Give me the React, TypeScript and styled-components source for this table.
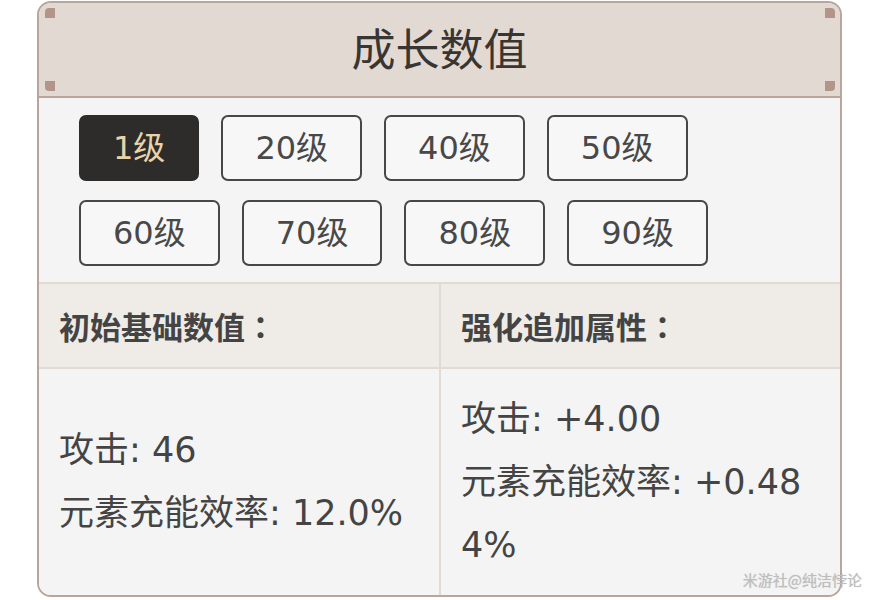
import React from 'react';
import styled, { createGlobalStyle, css } from 'styled-components';

const levels = [1, 20, 40, 50, 60, 70, 80, 90];

const baseStats = ['攻击: 46', '元素充能效率: 12.0%'];
const growthStats = ['攻击: +4.00', '元素充能效率: +0.484%'];

type Corner = 'tl' | 'tr' | 'bl' | 'br';

const App: React.FC = () => {
	const [level, setLevel] = React.useState(1);

	return (
		<Page>
			<GlobalStyle />
			<Card>
				<Header>
					<Title>成长数值</Title>
					{(['tl', 'tr', 'bl', 'br'] as Corner[]).map((c) => (
						<Rivet key={c} corner={c} />
					))}
				</Header>
				<LevelPanel>
					{levels.map((lv) => (
						<LevelButton key={lv} active={lv === level} onClick={() => setLevel(lv)}>
							{lv}级
						</LevelButton>
					))}
				</LevelPanel>
				<StatTable>
					<HeadCell>
						初始基础数值<Colon>：</Colon>
					</HeadCell>
					<HeadCell divider>
						强化追加属性<Colon>：</Colon>
					</HeadCell>
					<BodyCell>
						{baseStats.map((s) => (
							<StatLine key={s}>{s}</StatLine>
						))}
					</BodyCell>
					<BodyCell divider>
						{growthStats.map((s) => (
							<StatLine key={s}>{s}</StatLine>
						))}
					</BodyCell>
				</StatTable>
			</Card>
			<Watermark>米游社@纯洁悖论</Watermark>
		</Page>
	);
};

const GlobalStyle = createGlobalStyle`
	body {
		margin: 0;
		background: #fff;
		font-family: "DejaVu Sans", "Noto Sans CJK SC", sans-serif;
	}
`;

const Page = styled.div`
	position: relative;
	width: 877px;
	height: 600px;
	padding: 1px 0 0 37px;
	box-sizing: border-box;
`;

const Card = styled.div`
	box-sizing: border-box;
	width: 805px;
	border: 2px solid #b9a59b;
	border-radius: 14px;
	overflow: hidden;
	background: #f4f4f4;
`;

const Header = styled.div`
	position: relative;
	height: 95px;
	box-sizing: border-box;
	padding-bottom: 6px;
	display: flex;
	align-items: center;
	justify-content: center;
	background: #e2d9d2;
	border-bottom: 2px solid #b9a59b;
`;

const Title = styled.h1`
	margin: 0;
	font-family: "Noto Sans CJK SC", sans-serif;
	font-size: 44px;
	font-weight: 400;
	color: #383533;
`;

const Rivet = styled.span<{ corner: Corner }>`
	position: absolute;
	width: 10px;
	height: 10px;
	background: #b29489;
	${({ corner }) =>
		({
			tl: css`top: 5px; left: 6px; border-top-left-radius: 4px;`,
			tr: css`top: 5px; right: 5px; border-top-right-radius: 4px;`,
			bl: css`bottom: 5px; left: 6px; border-bottom-left-radius: 4px;`,
			br: css`bottom: 5px; right: 5px; border-bottom-right-radius: 4px;`,
		})[corner]}
`;

const LevelPanel = styled.div`
	display: flex;
	flex-wrap: wrap;
	column-gap: 22px;
	row-gap: 19px;
	padding: 17px 100px 16px 40px;
	background: #f4f4f4;
`;

const LevelButton = styled.button<{ active?: boolean }>`
	height: 66px;
	padding: 0 32px;
	border: 2px solid #474747;
	border-radius: 7px;
	font-family: inherit;
	font-size: 32px;
	line-height: 1;
	cursor: pointer;
	background: ${({ active }) => (active ? '#2d2c2b' : '#f7f7f7')};
	color: ${({ active }) => (active ? '#e9d4a9' : '#484848')};
	border-color: ${({ active }) => (active ? '#2d2c2b' : '#474747')};
`;

const StatTable = styled.div`
	display: grid;
	grid-template-columns: 400px 1fr;
	grid-template-rows: 85px 226px;
	border-top: 2px solid #e2dad4;
`;

const HeadCell = styled.div<{ divider?: boolean }>`
	display: flex;
	align-items: center;
	padding-left: 20px;
	background: #efebe6;
	border-bottom: 2px solid #e2dad4;
	border-left: ${({ divider }) => (divider ? '2px solid #e2dad4' : 'none')};
	font-family: "Noto Sans CJK SC", sans-serif;
	font-size: 31px;
	font-weight: 700;
	color: #444;
`;

const Colon = styled.span`
	font-family: "Noto Sans CJK TC", sans-serif;
`;

const BodyCell = styled.div<{ divider?: boolean }>`
	display: flex;
	flex-direction: column;
	justify-content: center;
	padding: 0 22px 0 20px;
	background: #f4f4f4;
	border-left: ${({ divider }) => (divider ? '2px solid #e2dad4' : 'none')};
	min-width: 0;
`;

const StatLine = styled.div`
	font-size: 35px;
	line-height: 63px;
	color: #444;
	word-break: break-all;
`;

const Watermark = styled.div`
	position: absolute;
	right: 15px;
	top: 569px;
	font-family: "Noto Sans CJK SC", sans-serif;
	font-size: 15px;
	color: #bdbdbd;
	text-shadow: 0 0 1px rgba(120, 120, 120, 0.35);
	white-space: nowrap;
`;

export default App;
